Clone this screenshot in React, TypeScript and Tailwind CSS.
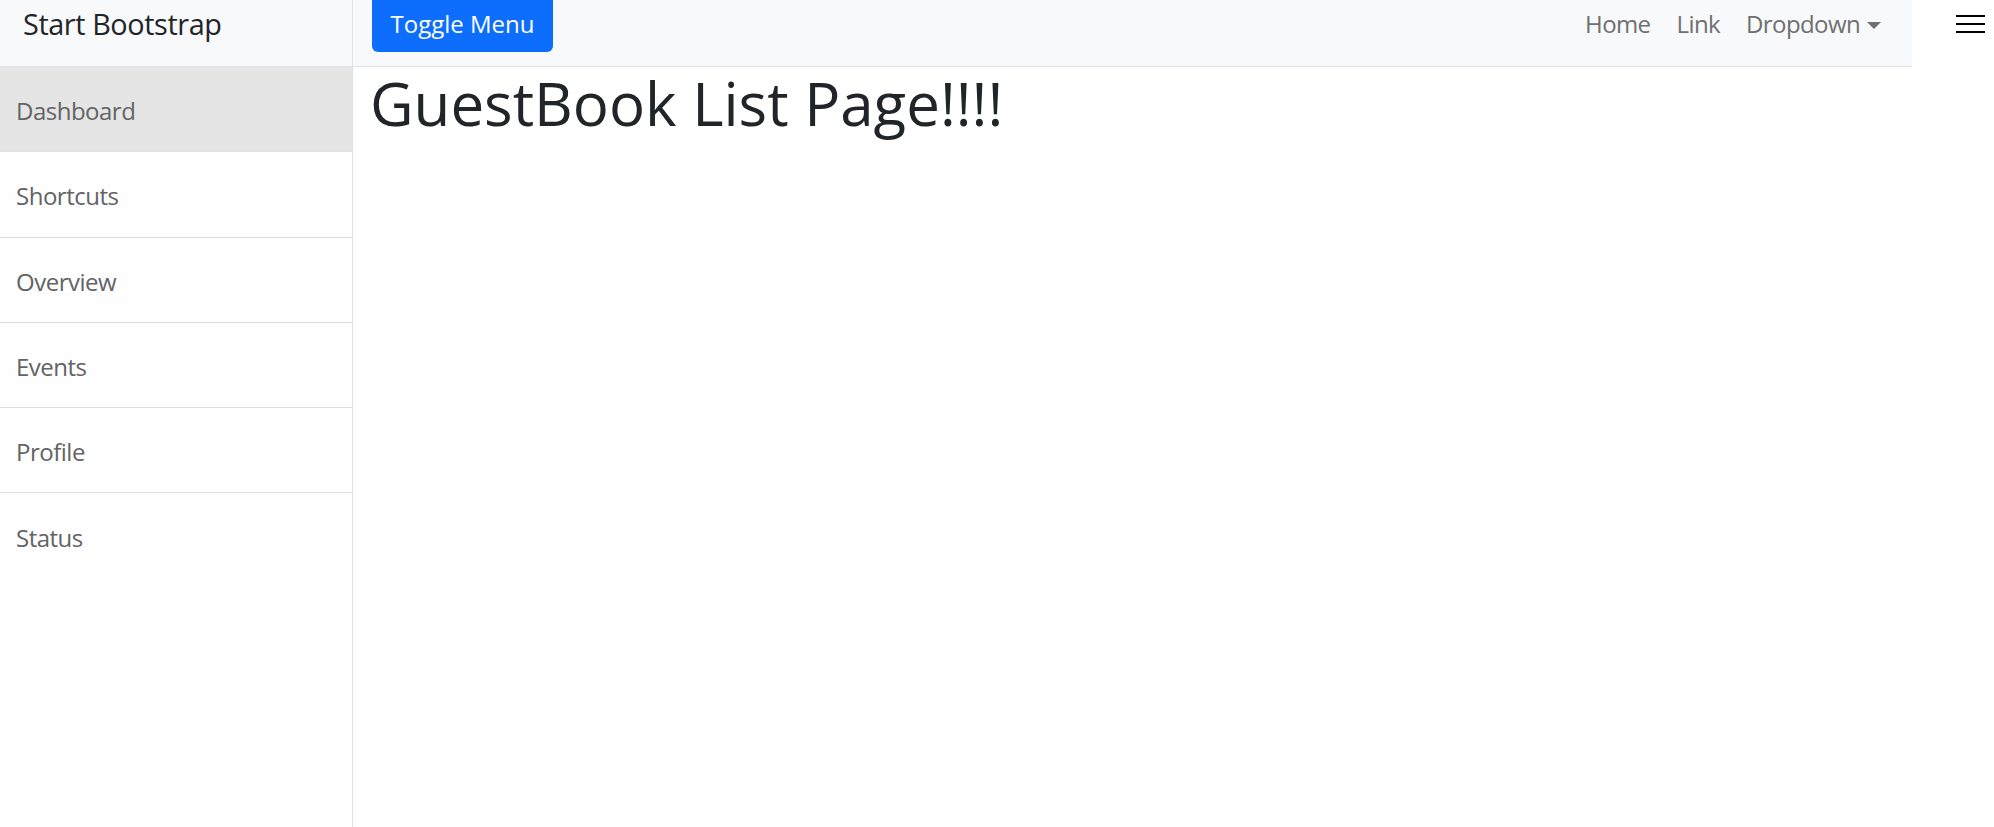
import React from "react";

const items = ["Dashboard", "Shortcuts", "Overview", "Events", "Profile", "Status"];

export default function App() {
  return (
    <div className="flex min-h-[827px] w-[1994px] overflow-hidden bg-white font-['Open_Sans',sans-serif]">
      {/* Sidebar */}
      <div className="flex w-[353px] shrink-0 flex-col border-r border-[#dee2e6]">
        <div className="h-[67px] border-b border-[#dee2e6] bg-[#f8f9fa] pl-[23px] pt-[2px] text-[28.8px] leading-[1.5] tracking-[-0.4px] text-[#212529]">
          Start Bootstrap
        </div>
        <div className="flex flex-col">
          {items.map((item, i) => (
            <a
              key={item}
              href="#"
              className={`flex h-[85.3px] items-center pl-[16px] pt-[4px] text-[24px] tracking-[-0.5px] text-[#636464] ${
                i === 0 ? "bg-[#e5e5e5]" : "bg-[#fefefe]"
              } ${i < items.length - 1 ? "border-b border-[#dfdfdf]" : ""}`}
            >
              {item}
            </a>
          ))}
        </div>
      </div>

      {/* Page content */}
      <div className="flex w-[1559px] shrink-0 flex-col">
        <nav className="flex h-[67px] items-start border-b border-[#dee2e6] bg-[#f8f9fa] pl-[19px] pr-[31px]">
          <button className="flex h-[52px] w-[181px] items-center justify-center rounded-b-[6px] bg-[#0d6efd] pb-[4px] text-[24px] text-white">
            Toggle Menu
          </button>
          <div className="ml-auto flex h-[52px] items-center gap-[26px] pb-[4px] text-[24px] tracking-[-0.6px] text-[#6f7071]">
            <a href="#">Home</a>
            <a href="#">Link</a>
            <a href="#" className="flex items-center gap-[7px]">
              Dropdown
              <span className="mt-[2px] h-0 w-0 border-x-[7px] border-t-[7px] border-x-transparent border-t-[#6f7071]" />
            </a>
          </div>
        </nav>
        <div className="pl-[17px]">
          <h1 className="text-[60px] leading-[1.2] text-[#212529]">GuestBook List Page!!!!</h1>
        </div>
      </div>

      {/* Toggler */}
      <div className="flex flex-1 justify-end pr-[9px] pt-[15px]">
        <div className="flex h-[18px] w-[29px] flex-col justify-between">
          <span className="h-[2px] bg-black" />
          <span className="h-[2px] bg-black" />
          <span className="h-[2px] bg-black" />
        </div>
      </div>
    </div>
  );
}
